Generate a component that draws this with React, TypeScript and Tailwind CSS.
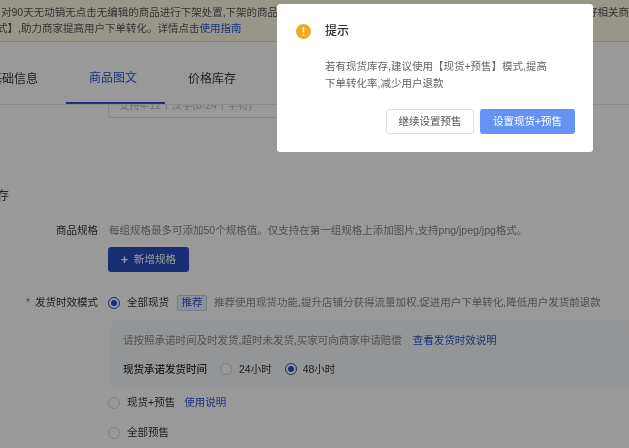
const font = { fontFamily: '"Liberation Sans", "Noto Sans CJK SC", sans-serif' };

const Radio = ({ on = false }: { on?: boolean }) => (
  <span
    className={`flex h-3 w-3 shrink-0 items-center justify-center rounded-full border bg-white ${on ? 'border-[#2a4fc0]' : 'border-[#d4d6da]'}`}
  >
    {on && <span className="h-1.5 w-1.5 rounded-full bg-[#2a4fc0]" />}
  </span>
);

const Tab = ({ label, active = false }: { label: string; active?: boolean }) => (
  <div
    className={`flex w-[99px] shrink-0 items-center justify-center pr-[5px] pt-[12px] text-[12px] ${active ? 'border-b-2 border-[#2d55c8] text-[#2d55c8]' : 'text-[#333]'}`}
  >
    {label}
  </div>
);

const App = () => {
  return (
    <div style={font} className="relative h-[448px] w-[629px] overflow-hidden bg-white text-[10.5px] text-[#333] blur-[0.35px]">
      <div className="flex h-[42px] flex-col justify-center gap-[5px] border-b border-[#f5d9a0] bg-[#fdf9e6] pl-[1px] leading-[11px] text-[#555]">
        <div className="flex justify-between whitespace-nowrap">
          <span>对90天无动销无点击无编辑的商品进行下架处置,下架的商品</span>
          <span>好相关商</span>
        </div>
        <div className="-ml-[4px] whitespace-nowrap">
          式】,助力商家提高用户下单转化。详情点击<span className="text-[#2d55c8]">使用指南</span>
        </div>
      </div>

      <div className="relative z-10 -ml-[33px] flex h-[63px] border-b border-[#e8e8e8] bg-white">
        <Tab label="基础信息" />
        <Tab label="商品图文" active />
        <Tab label="价格库存" />
      </div>

      <div className="-mt-[14px] ml-[108px] flex h-[27px] w-[300px] items-end rounded-[3px] border border-[#ddd] pb-[3px] pl-[10px] text-[#bbb]">
        支持4-12个汉字(8-24个字符)
      </div>

      <div className="mt-[70px] -ml-[3px] text-[12px] leading-[16px]">存</div>

      <div className="mt-[19px] flex items-center leading-[14px]">
        <div className="w-[98px] text-right">商品规格</div>
        <div className="ml-[11px] whitespace-nowrap text-[#888]">
          每组规格最多可添加50个规格值。仅支持在第一组规格上添加图片,支持png/jpeg/jpg格式。
        </div>
      </div>

      <div className="ml-[108px] mt-[10px] flex h-[25px] w-[81px] items-center justify-center gap-[6px] rounded-[3px] bg-[#2a4fc0] text-white">
        <span className="text-[12px] font-bold leading-none">+</span>
        新增规格
      </div>

      <div className="mt-[23px] flex h-[16px] items-center whitespace-nowrap">
        <div className="w-[98px] text-right">
          <span className="mr-[2px] text-[#e5484d]">*</span> 发货时效模式
        </div>
        <div className="ml-[10px]">
          <Radio on />
        </div>
        <span className="ml-[7px]">全部现货</span>
        <span className="ml-[8px] flex h-[16px] w-[30px] items-center justify-center rounded-[2px] border border-[#c5d1f2] bg-[#eef2fc] text-[#2d55c8]">
          推荐
        </span>
        <span className="ml-[7px] text-[#888]">推荐使用现货功能,提升店铺分获得流量加权,促进用户下单转化,降低用户发货前退款</span>
      </div>

      <div className="ml-[111px] mt-[9px] flex h-[69px] flex-col justify-center gap-[15px] rounded-[3px] bg-[#f7f8fa] pl-[12px] leading-[14px]">
        <div className="flex whitespace-nowrap text-[#888]">
          请按照承诺时间及时发货,超时未发货,买家可向商家申请赔偿
          <span className="ml-[11px] text-[#2d55c8]">查看发货时效说明</span>
        </div>
        <div className="flex items-center whitespace-nowrap">
          <span className="font-medium">现货承诺发货时间</span>
          <span className="ml-[13px]">
            <Radio />
          </span>
          <span className="ml-[7px]">24小时</span>
          <span className="ml-[13px]">
            <Radio on />
          </span>
          <span className="ml-[6px]">48小时</span>
        </div>
      </div>

      <div className="ml-[108px] mt-[7px] flex h-[14px] items-center">
        <Radio />
        <span className="ml-[7px]">现货+预售</span>
        <span className="ml-[9px] text-[#2d55c8]">使用说明</span>
      </div>

      <div className="ml-[108px] mt-[16px] flex h-[14px] items-center">
        <Radio />
        <span className="ml-[7px]">全部预售</span>
      </div>

      {/* mask + dialog */}
      <div className="absolute inset-0 z-20 bg-black/40" />
      <div className="absolute left-[277px] top-[4px] z-30 h-[148px] w-[316px] rounded-[3px] bg-white pl-[19px] pr-[18px] pt-[19px]">
        <div className="flex items-center">
          <svg width="15" height="15" viewBox="0 0 15 15" className="shrink-0">
            <circle cx="7.5" cy="7.5" r="7.5" fill="#f5a623" />
            <rect x="6.7" y="3.2" width="1.6" height="5.6" rx="0.8" fill="#fff" />
            <circle cx="7.5" cy="10.9" r="0.95" fill="#fff" />
          </svg>
          <span className="ml-[14px] text-[12px] font-medium leading-[16px] text-[#333]">提示</span>
        </div>
        <p className="ml-[29px] mt-[19px] whitespace-nowrap text-[10.5px] leading-[17px] text-[#666]">
          若有现货库存,建议使用【现货+预售】模式,提高
          <br />
          下单转化率,减少用户退款
        </p>
        <div className="mt-[17px] flex justify-end gap-[6px]">
          <button className="h-[25px] w-[88px] rounded-[3px] border border-[#ddd] bg-white text-[10.5px] text-[#555]">
            继续设置预售
          </button>
          <button className="h-[25px] w-[95px] rounded-[3px] bg-[#6592f5] text-[10.5px] text-white">
            设置现货+预售
          </button>
        </div>
      </div>
    </div>
  );
};

export default App;
